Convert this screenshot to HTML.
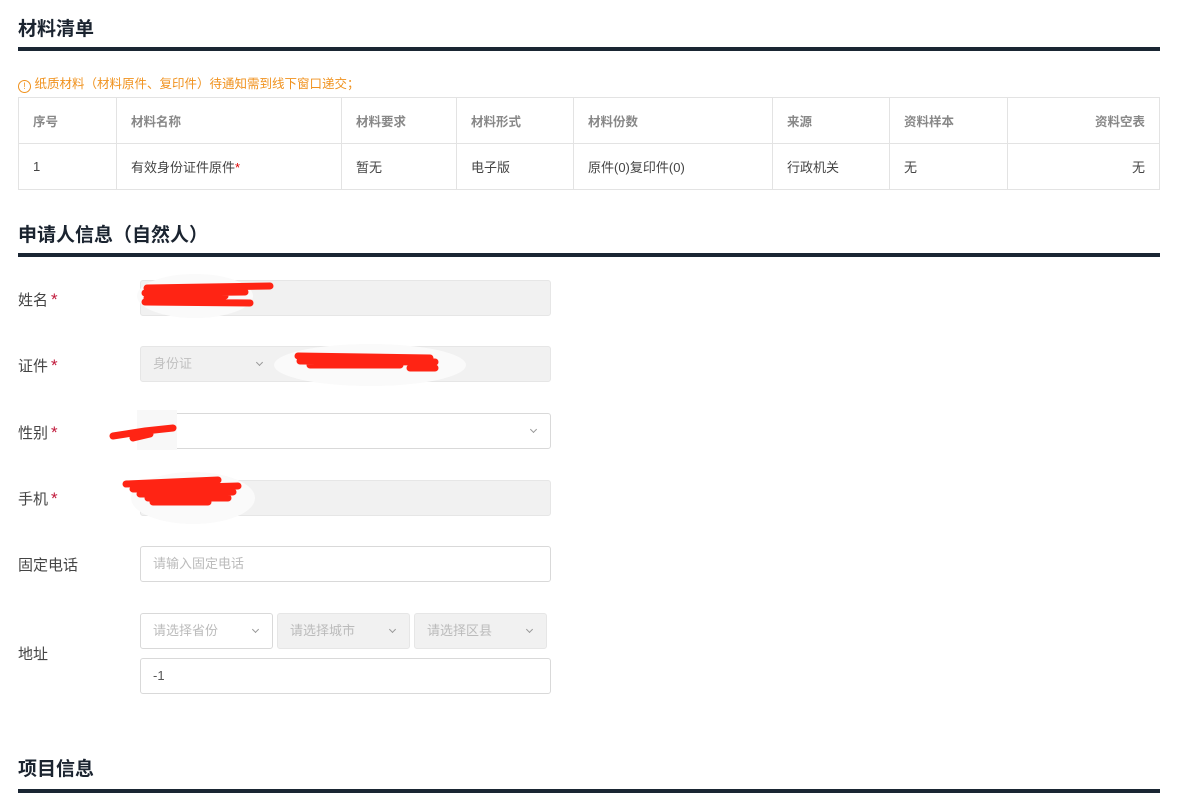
<!DOCTYPE html>
<html><head><meta charset="utf-8"><style>
*{box-sizing:border-box;margin:0;padding:0}
body{width:1200px;height:809px;background:#fff;position:relative;overflow:hidden;font-family:"Liberation Sans","Noto Sans CJK SC",sans-serif;color:#333;font-size:14px}
.a{position:absolute}
.t{position:absolute;left:18px;font-size:19px;font-weight:bold;color:#1b2430}
.ln{position:absolute;left:18px;width:1142px;height:4px;background:#1a2633}
.lbl{position:absolute;left:18px;font-size:15px;color:#444}
.st{color:#c0183a;font-size:17px;margin-left:3px}
.in{position:absolute;height:36px;border:1px solid #d9d9d9;border-radius:3px;background:#fff;font-size:13px;color:#bbb;padding-left:12px;line-height:34px}
.dis{background:#f1f1f1;border-color:#e6e6e6}
.ch{position:absolute;right:14px;top:13px;width:5px;height:5px;border-right:1px solid #999;border-bottom:1px solid #999;transform:rotate(45deg)}
table{position:absolute;left:18px;top:97px;border-collapse:collapse;width:1142px}
td{border:1px solid #e3e3e3;height:46px;padding-left:14px;font-size:13px;color:#444}
tr.h td{color:#888;font-weight:600;font-size:12.5px}
</style></head><body>
<div class="t" style="top:14px">材料清单</div>
<div class="ln" style="top:47px"></div>
<div class="a" style="left:18px;top:73px;font-size:12.5px;color:#f0921e"><span style="display:inline-block;width:13px;height:13px;border:1px solid #f0921e;border-radius:50%;font-size:9px;line-height:11px;text-align:center;vertical-align:-1px">!</span> 纸质材料（材料原件、复印件）待通知需到线下窗口递交；</div>
<table>
<tr class="h"><td style="width:98px">序号</td><td style="width:225px">材料名称</td><td style="width:115px">材料要求</td><td style="width:117px">材料形式</td><td style="width:199px">材料份数</td><td style="width:117px">来源</td><td style="width:118px">资料样本</td><td style="text-align:right;padding-right:14px">资料空表</td></tr>
<tr><td>1</td><td>有效身份证件原件<span style="color:#d00">*</span></td><td>暂无</td><td>电子版</td><td>原件(0)复印件(0)</td><td>行政机关</td><td>无</td><td style="text-align:right;padding-right:14px">无</td></tr>
</table>
<div class="t" style="top:220px">申请人信息（自然人）</div>
<div class="ln" style="top:253px"></div>

<div class="lbl" style="top:289px">姓名<span class="st">*</span></div>
<div class="in dis" style="left:140px;top:280px;width:411px"></div>
<svg class="a" style="left:135px;top:272px" width="150" height="48"><ellipse cx="60" cy="24" rx="58" ry="22" fill="#fafafa"/><path d="M12 16 L135 14 M10 21 L110 20 M12 26 L90 24 M10 30 L115 31" stroke="#ff2414" stroke-width="7" stroke-linecap="round"/></svg>

<div class="lbl" style="top:355px">证件<span class="st">*</span></div>
<div class="in dis" style="left:140px;top:346px;width:411px"><span style="position:absolute;left:12px;color:#c0c0c0">身份证</span><div class="ch" style="left:116px;right:auto"></div></div>
<svg class="a" style="left:270px;top:342px" width="200" height="46"><ellipse cx="100" cy="23" rx="96" ry="21" fill="#fafafa"/><path d="M28 14 L160 16 M30 19 L165 20 M40 23 L130 23 M140 26 L165 26" stroke="#ff2414" stroke-width="7" stroke-linecap="round"/></svg>

<div class="lbl" style="top:422px">性别<span class="st">*</span></div>
<div class="in" style="left:140px;top:413px;width:411px"><div class="ch"></div></div>
<svg class="a" style="left:105px;top:410px" width="75" height="40"><rect x="32" y="0" width="40" height="40" fill="#f8f8f8"/><path d="M8 26 L40 21 L68 18 M45 24 L28 28" stroke="#ff2414" stroke-width="7" stroke-linecap="round"/></svg>

<div class="lbl" style="top:488px">手机<span class="st">*</span></div>
<div class="in dis" style="left:140px;top:480px;width:411px"></div>
<svg class="a" style="left:118px;top:470px" width="140" height="56"><ellipse cx="75" cy="28" rx="62" ry="26" fill="#fafafa"/><path d="M8 14 L100 10 M15 19 L120 16 M22 24 L115 22 M30 28 L110 28 M35 32 L90 32" stroke="#ff2414" stroke-width="7" stroke-linecap="round"/></svg>

<div class="lbl" style="top:554px">固定电话</div>
<div class="in" style="left:140px;top:546px;width:411px">请输入固定电话</div>

<div class="lbl" style="top:643px">地址</div>
<div class="in" style="left:140px;top:613px;width:133px">请选择省份<div class="ch"></div></div>
<div class="in dis" style="left:277px;top:613px;width:133px">请选择城市<div class="ch"></div></div>
<div class="in dis" style="left:414px;top:613px;width:133px">请选择区县<div class="ch"></div></div>
<div class="in" style="left:140px;top:658px;width:411px;color:#555">-1</div>

<div class="t" style="top:754px">项目信息</div>
<div class="ln" style="top:789px"></div>
</body></html>
